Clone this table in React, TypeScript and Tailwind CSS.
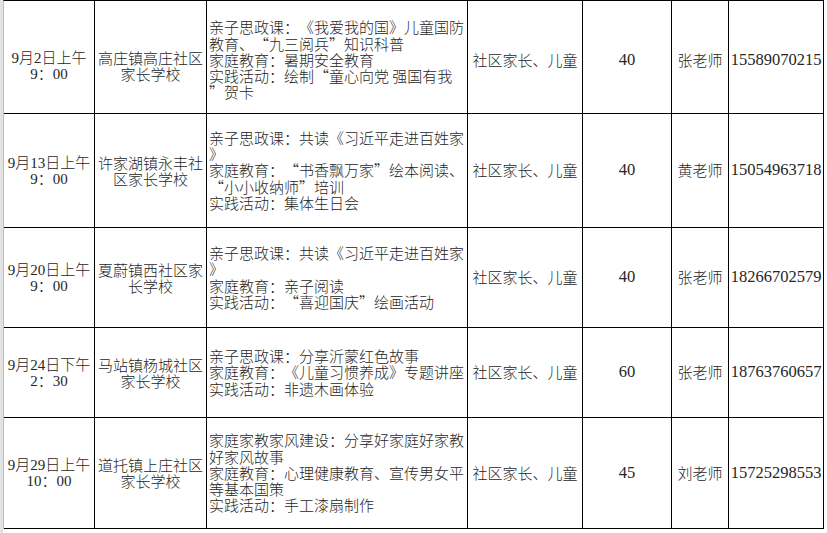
const CJK = "font-['Noto_Sans_CJK_SC',sans-serif]";
const NUM = "font-['Liberation_Serif','Noto_Sans_CJK_SC',serif]";

interface Row {
  height: string;
  shift: string;
  sideShift: string;
  time: string[];
  place: string[];
  content: string[];
  count: string;
  teacher: string;
  phone: string;
}

const ROWS: Row[] = [
  {
    height: 'h-[113px]',
    shift: 'pt-[6px]',
    sideShift: 'pt-[18px]',
    time: ['9月2日上午', '9：00'],
    place: ['高庄镇高庄社区', '家长学校'],
    content: [
      '亲子思政课：《我爱我的国》儿童国防',
      '教育、“九三阅兵”知识科普',
      '家庭教育：暑期安全教育',
      '实践活动：绘制“童心向党 强国有我',
      '”贺卡',
    ],
    count: '40',
    teacher: '张老师',
    phone: '15589070215',
  },
  {
    height: 'h-[114px]',
    shift: '',
    sideShift: '',
    time: ['9月13日上午', '9：00'],
    place: ['许家湖镇永丰社', '区家长学校'],
    content: [
      '亲子思政课：共读《习近平走进百姓家',
      '》',
      '家庭教育：“书香飘万家”绘本阅读、',
      '“小小收纳师”培训',
      '实践活动：集体生日会',
    ],
    count: '40',
    teacher: '黄老师',
    phone: '15054963718',
  },
  {
    height: 'h-[100px]',
    shift: '',
    sideShift: '',
    time: ['9月20日上午', '9：00'],
    place: ['夏蔚镇西社区家', '长学校'],
    content: [
      '亲子思政课：共读《习近平走进百姓家',
      '》',
      '家庭教育：亲子阅读',
      '实践活动：“喜迎国庆”绘画活动',
    ],
    count: '40',
    teacher: '张老师',
    phone: '18266702579',
  },
  {
    height: 'h-[90px]',
    shift: '',
    sideShift: '',
    time: ['9月24日下午', '2：30'],
    place: ['马站镇杨城社区', '家长学校'],
    content: [
      '亲子思政课：分享沂蒙红色故事',
      '家庭教育：《儿童习惯养成》专题讲座',
      '实践活动：非遗木画体验',
    ],
    count: '60',
    teacher: '张老师',
    phone: '18763760657',
  },
  {
    height: 'h-[111px]',
    shift: '',
    sideShift: '',
    time: ['9月29日上午', '10：00'],
    place: ['道托镇上庄社区', '家长学校'],
    content: [
      '家庭家教家风建设：分享好家庭好家教',
      '好家风故事',
      '家庭教育：心理健康教育、宣传男女平',
      '等基本国策',
      '实践活动：手工漆扇制作',
    ],
    count: '45',
    teacher: '刘老师',
    phone: '15725298553',
  },
];

// the source uses full-width curly quotes, so give each one a full character cell
function QuotedLine({ text }: { text: string }) {
  const parts = text.split(/([“”])/);
  return (
    <div className="whitespace-nowrap">
      {parts.map((p, i) =>
        p === '“' ? (
          <span key={i} className="inline-block w-[15px] text-right">
            “
          </span>
        ) : p === '”' ? (
          <span key={i} className="inline-block w-[15px] text-left">
            ”
          </span>
        ) : (
          <span key={i}>{p}</span>
        ),
      )}
    </div>
  );
}

function Lines({ lines }: { lines: string[] }) {
  return (
    <div>
      {lines.map((l, i) => (
        <QuotedLine key={i} text={l} />
      ))}
    </div>
  );
}

const cell = 'flex h-full items-center border-r border-black';

export default function App() {
  return (
    <div className="flex h-[533px] w-[827px] bg-white font-light text-[#262626] [text-spacing-trim:space-all]">
      <div className="w-[3px] bg-[#e2e2e2]" />
      <div className="w-[821px] self-start border-l border-t border-l-[#bdbdbd] border-t-black">
        {ROWS.map(r => (
          <div key={r.phone} className={`flex border-b border-black ${r.height}`}>
            <div className={`${cell} ${NUM} ${r.sideShift} w-[91px] justify-center text-center text-[15px] leading-[16px]`}>
              <Lines lines={r.time} />
            </div>
            <div className={`${cell} ${CJK} ${r.sideShift} w-[112px] justify-center text-center text-[15px] leading-[16px]`}>
              <Lines lines={r.place} />
            </div>
            <div className={`${cell} ${CJK} ${r.shift} w-[261px] pl-[2px] text-[15px] leading-[16.25px]`}>
              <Lines lines={r.content} />
            </div>
            <div className={`${cell} ${CJK} ${r.shift} w-[115px] justify-center text-[15px]`}>社区家长、儿童</div>
            <div className={`${cell} ${NUM} ${r.shift} w-[89px] justify-center text-[16.5px]`}>{r.count}</div>
            <div className={`${cell} ${CJK} ${r.shift} w-[57px] justify-center text-[15px]`}>{r.teacher}</div>
            <div className={`${cell} ${NUM} ${r.shift} w-[95px] justify-center text-[16.5px]`}>{r.phone}</div>
          </div>
        ))}
      </div>
    </div>
  );
}
